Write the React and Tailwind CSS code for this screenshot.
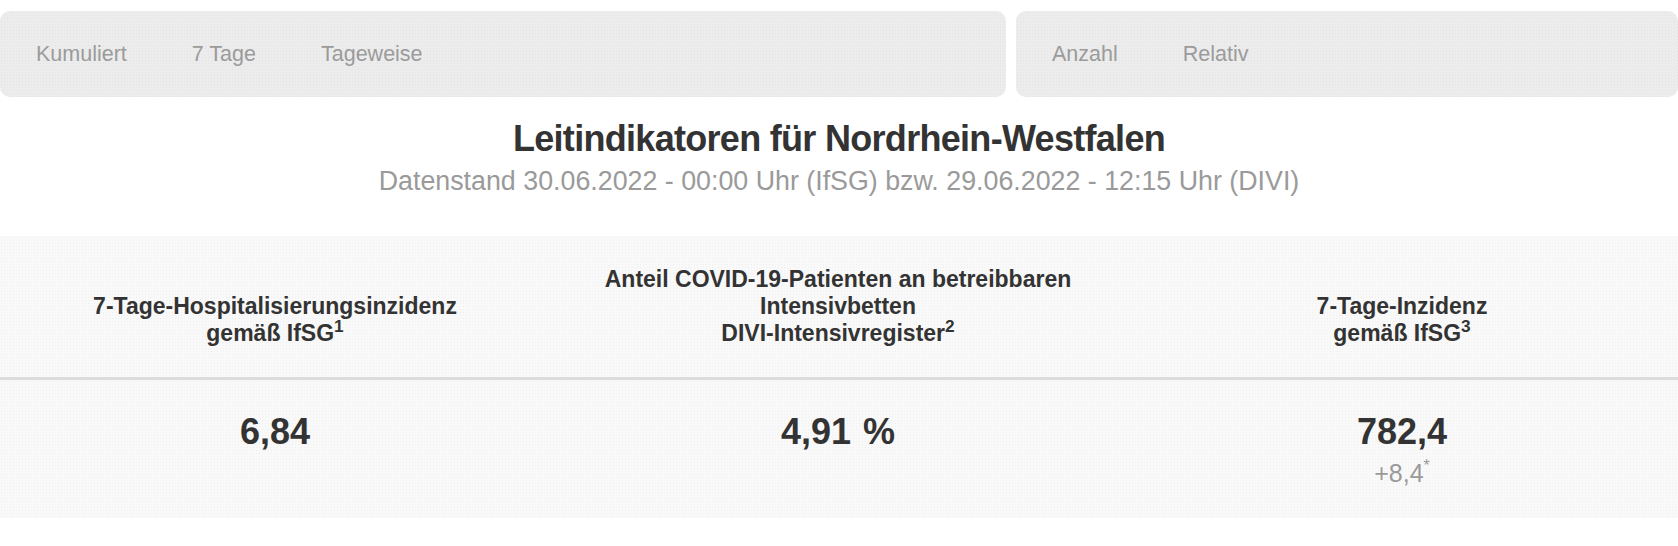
const tabsLeft = ["Kumuliert", "7 Tage", "Tageweise"];
const tabsRight = ["Anzahl", "Relativ"];

const barDots =
	"bg-[radial-gradient(circle,#e4e4e4_0.6px,transparent_0.8px)] bg-size-[3px_3px]";
const tableDots =
	"bg-[radial-gradient(circle,#efefef_0.6px,transparent_0.8px)] bg-size-[3px_3px]";

const TabBar = ({ items }) => (
	<div
		className={`h-[86px] rounded-[10px] bg-[#ececec] ${barDots} flex items-center pl-[36px] gap-[65px] text-[21.5px] text-[#9b9b9b]`}
	>
		{items.map((t) => (
			<span key={t}>{t}</span>
		))}
	</div>
);

export default function App() {
	return (
		<div className="w-[1678px] min-h-[546px] bg-white font-['Liberation_Sans',Arial,sans-serif]">
			{/* Tabs */}
			<div className="pt-[11px] grid grid-cols-[1006px_1fr] gap-[10px]">
				<TabBar items={tabsLeft} />
				<TabBar items={tabsRight} />
			</div>

			{/* Title */}
			<h1 className="mt-[21px] text-center text-[36px] leading-[41px] font-bold tracking-[-0.7px] text-[#333]">
				Leitindikatoren für Nordrhein-Westfalen
			</h1>
			<p className="mt-[7px] text-center text-[26.8px] leading-[30px] text-[#9a9a9a]">
				Datenstand 30.06.2022 - 00:00 Uhr (IfSG) bzw. 29.06.2022 - 12:15 Uhr (DIVI)
			</p>

			{/* Table */}
			<div className={`mt-[40px] bg-[#f9f9f9] ${tableDots} text-[#333]`}>
				<div className="grid grid-cols-[550px_576px_1fr] items-end border-b-[3px] border-[#dcdcdc] text-center text-[23px] leading-[27px] font-bold">
					<div className="py-[30px]">
						7-Tage-Hospitalisierungsinzidenz
						<br />
						gemäß IfSG<sup>1</sup>
					</div>
					<div className="py-[30px]">
						Anteil COVID-19-Patienten an betreibbaren
						<br />
						Intensivbetten
						<br />
						DIVI-Intensivregister<sup>2</sup>
					</div>
					<div className="py-[30px]">
						7-Tage-Inzidenz
						<br />
						gemäß IfSG<sup>3</sup>
					</div>
				</div>
				<div className="grid grid-cols-[550px_576px_1fr] items-start text-center pt-[31px] h-[138px]">
					<div className="text-[36px] leading-[41px] font-bold">6,84</div>
					<div className="text-[36px] leading-[41px] font-bold">
						4,91<span className="ml-[12px]">%</span>
					</div>
					<div>
						<div className="text-[36px] leading-[41px] font-bold">782,4</div>
						<div className="mt-[7px] text-[25px] leading-[29px] text-[#9a9a9a]">
							+8,4<sup className="text-[16px] -top-[0.7em]">*</sup>
						</div>
					</div>
				</div>
			</div>
		</div>
	);
}
